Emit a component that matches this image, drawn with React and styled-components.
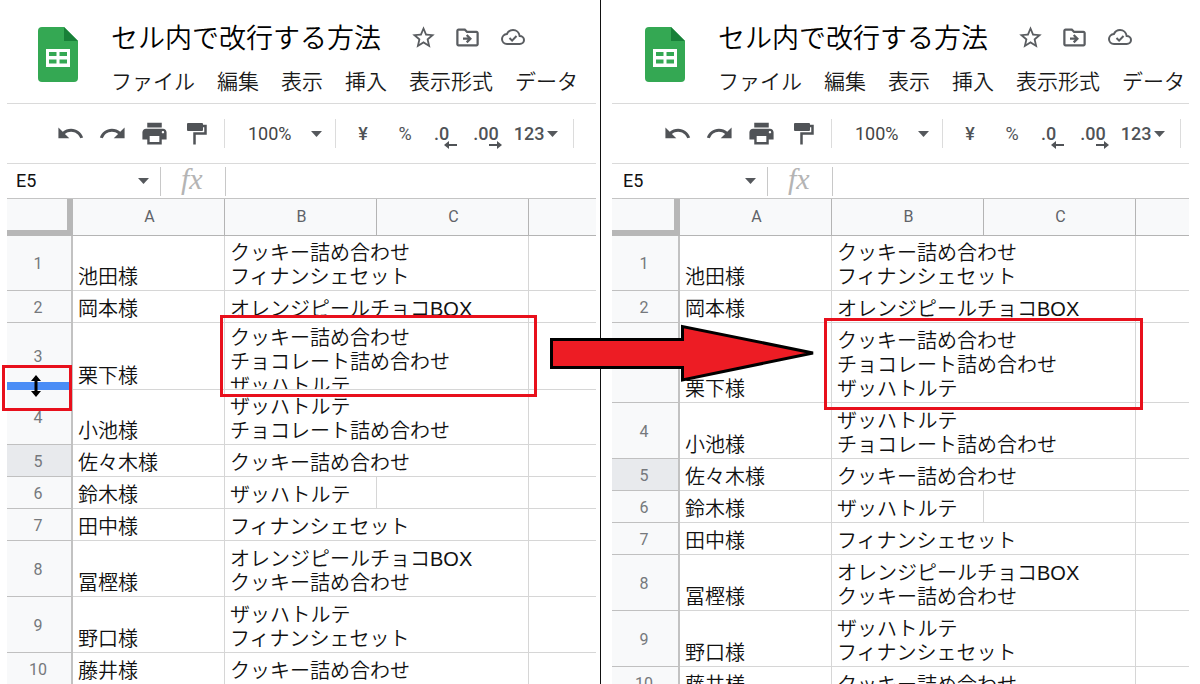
import React from 'react'
import styled, { createGlobalStyle } from 'styled-components'
import { MdStarBorder, MdOutlineDriveFileMove, MdUndo, MdRedo, MdPrint } from 'react-icons/md'

const GlobalStyle = createGlobalStyle`
  * {
    box-sizing: border-box;
  }
  body {
    margin: 0;
    background: #ffffff;
    font-family: Roboto, "Noto Sans CJK JP", sans-serif;
  }
  button, input, select {
    font: inherit;
    color: inherit;
    background: none;
    border: 0;
    padding: 0;
    margin: 0;
  }
`

const Page = styled.main`
  position: relative;
  display: flex;
  height: 100vh;
  overflow: hidden;
`

const Pane = styled.section`
  --inset: ${p => (p.$after ? '2px' : '0px')};
  position: relative;
  width: 50%;
  min-width: 0;
  padding: ${p => (p.$after ? '0 11px' : '0 4px 0 7px')};
  border-left: ${p => (p.$after ? '1px solid #111111' : 'none')};
`

const Header = styled.header`
  display: flex;
  gap: 33px;
  height: 104px;
  padding-left: calc(31px + var(--inset));
  border-bottom: 1px solid #dadada;
`

const Logo = styled.svg`
  flex: none;
  width: 40px;
  height: 55px;
  margin-top: 27px;
`

const DocInfo = styled.div`
  display: flex;
  flex-direction: column;
  gap: 9px;
  padding-top: 17px;
  min-width: 0;
`

const TitleRow = styled.div`
  display: flex;
  align-items: center;
  height: 40px;
`

const Title = styled.h1`
  margin: 0 29px 0 0;
  font: 350 27px/40px "Noto Sans CJK JP", sans-serif;
  color: #000000;
  white-space: nowrap;
`

const TitleButton = styled.button`
  display: flex;
  justify-content: center;
  width: 45px;
  color: #5a5d61;

  &:first-of-type {
    width: 27px;
    margin-right: 8px;
  }
`

const Menu = styled.nav`
  display: flex;
  gap: 22px;
`

const MenuItem = styled.button`
  font: 350 21px/28px "Noto Sans CJK JP", sans-serif;
  color: #1a1a1a;
  white-space: nowrap;
`

const Toolbar = styled.div`
  display: flex;
  align-items: center;
  height: 60px;
  padding-left: calc(42px + var(--inset));
  border-bottom: 1px solid #dadada;
  font-size: 18px;
  color: #505357;
`

const Tool = styled.button`
  display: flex;
  align-items: center;
  justify-content: center;
  width: 42px;
  height: 36px;
  font-weight: ${p => (p.$bold ? 500 : 400)};
`

const Separator = styled.span`
  flex: none;
  width: 1px;
  height: 29px;
  margin: 0 ${p => p.$right || 0}px 0 ${p => p.$left || 0}px;
  background: ${p => p.$color || '#dcdcdc'};
`

const Zoom = styled.label`
  display: flex;
  align-items: center;

  select {
    width: 63px;
    appearance: none;
    color: #444444;
  }
`

const Decimals = styled.div`
  display: flex;
  gap: 16px;
  margin: 0 12px 0 8px;
`

const Decimal = styled.button`
  display: flex;
  flex-direction: column;
  align-items: flex-end;
  padding-top: 9px;
  font-weight: 500;
  line-height: 14px;

  span {
    padding-right: ${p => p.$tail}px;
  }
`

const NumberFormat = styled.button`
  display: flex;
  align-items: center;
  gap: 3px;
  font-weight: 500;
`

const FormulaBar = styled.div`
  display: flex;
  align-items: center;
  height: 35px;
  padding-left: calc(9px + var(--inset));
  border-bottom: 1px solid #c4c4c4;
`

const NameBox = styled.input`
  width: 122px;
  padding-bottom: 2px;
  font-size: 18px;
  color: #111111;
`

const Fx = styled.span`
  width: 64px;
  padding: 0 0 4px 20px;
  font: italic 30px/30px "Liberation Serif", serif;
  color: #b4b4b4;
`

const FormulaInput = styled.input`
  flex: 1;
  min-width: 0;
  padding-left: 6px;
`

const Sheet = styled.table`
  width: 100%;
  table-layout: fixed;
  border-collapse: separate;
  border-spacing: 0;
`

const NumberCol = styled.col`
  width: calc(66px + var(--inset));
`

const DataCol = styled.col`
  width: 152px;
`

const Corner = styled.td`
  height: 37px;
  padding: 0;
  background: #f8f9fa;
  border-right: 6px solid #b7b7b7;
  border-bottom: 6px solid #b7b7b7;
`

const ColHead = styled.th`
  height: 37px;
  padding: 0 0 2px 2px;
  font-size: 16px;
  font-weight: 400;
  color: #606368;
  background: #f8f9fa;
  border-right: 1px solid #b4b4b4;
  border-bottom: 1px solid #b4b4b4;

  &:last-child {
    border-right: 0;
  }
`

const RowHead = styled.th`
  height: ${p => p.$height}px;
  padding: 2px 2px 0 0;
  font-size: 16px;
  font-weight: 400;
  line-height: 20px;
  color: #75787c;
  background: ${p => (p.$active ? '#e8eaed' : '#f8f9fa')};
  border-right: 2px solid #c2c2c2;
  border-bottom: 1px solid #c0c0c0;
`

const Cell = styled.td`
  padding: 0;
  vertical-align: bottom;
  border-right: 1px solid #d6d6d6;
  border-bottom: 1px solid #d6d6d6;

  &:last-child {
    border-right: 0;
  }
`

const CellText = styled.div`
  max-height: ${p => p.$max}px;
  padding: 3px 0 1px 5px;
  overflow-y: clip;
  font: 350 20px/24px "Liberation Sans", "Noto Sans CJK JP", sans-serif;
  color: #111111;
  white-space: pre;
`

const Callout = styled.div`
  position: absolute;
  left: ${p => p.$x}px;
  top: ${p => p.$y}px;
  width: ${p => p.$w}px;
  height: ${p => p.$h}px;
  border: 3px solid #e8101c;
  pointer-events: none;
`

const ResizeBar = styled.div`
  position: absolute;
  left: 7px;
  top: 382px;
  width: 63px;
  height: 8px;
  background: #4a8df6;
`

const ResizeCursor = styled.svg`
  position: absolute;
  left: 30px;
  top: 375px;
  width: 12px;
  height: 22px;
`

const BigArrow = styled.svg`
  position: absolute;
  left: 548px;
  top: 322px;
  width: 270px;
  height: 62px;
`

const menuItems = ['ファイル', '編集', '表示', '挿入', '表示形式', 'データ']

const rows = [
  { name: '池田様', order: 'クッキー詰め合わせ\nフィナンシェセット' },
  { name: '岡本様', order: 'オレンジピールチョコBOX' },
  { name: '栗下様', order: 'クッキー詰め合わせ\nチョコレート詰め合わせ\nザッハトルテ' },
  { name: '小池様', order: 'ザッハトルテ\nチョコレート詰め合わせ' },
  { name: '佐々木様', order: 'クッキー詰め合わせ' },
  { name: '鈴木様', order: 'ザッハトルテ', fits: true },
  { name: '田中様', order: 'フィナンシェセット' },
  { name: '冨樫様', order: 'オレンジピールチョコBOX\nクッキー詰め合わせ' },
  { name: '野口様', order: 'ザッハトルテ\nフィナンシェセット' },
  { name: '藤井様', order: 'クッキー詰め合わせ' },
]

const heightsBefore = [55, 32, 67, 55, 32, 32, 32, 56, 56, 32]
const heightsAfter = [55, 32, 80, 56, 32, 32, 32, 56, 56, 32]

const Caret = () => (
  <svg width="11" height="6" viewBox="0 0 11 6" aria-hidden="true">
    <path d="M0 0h11L5.5 6z" fill="#55585c" />
  </svg>
)

const SheetsLogo = () => (
  <Logo viewBox="0 0 40 55" aria-label="スプレッドシート">
    <path d="M4 0h22l14 14v37a4 4 0 0 1-4 4H4a4 4 0 0 1-4-4V4a4 4 0 0 1 4-4z" fill="#34a853" />
    <path d="M26 0l14 14H26z" fill="#188038" />
    <path
      d="M8 22h24v18H8zM11 25v4h7.500v-4zM21.500 25v4H29v-4zM11 32.500v4h7.500v-4zM21.500 32.500v4H29v-4z"
      fill="#ffffff"
      fillRule="evenodd"
    />
  </Logo>
)

const CloudDone = () => (
  <svg width="24" height="24" viewBox="0 0 24 24" fill="none" stroke="currentColor" strokeWidth="2">
    <path d="M18.700 11c-.5-3.600-3.300-6-6.700-6-2.800 0-5 1.600-6.100 4C3.200 9.300 1 11.400 1 14.100 1 16.900 3.200 19 6 19h12.700C21.100 19 23 17.200 23 15s-1.900-4-4.300-4z" />
    <path d="M8.500 13l2.600 2.600 4.400-4.600" />
  </svg>
)

const PaintFormat = () => (
  <svg width="22" height="22" viewBox="0 0 22 22">
    <rect x="2" y="0" width="16" height="8" rx="1" fill="currentColor" />
    <path d="M18 3h2.500v7.500H9.500V21.500" fill="none" stroke="currentColor" strokeWidth="2.500" />
  </svg>
)

const DecimalArrow = ({ right }) => (
  <svg width="13" height="8" viewBox="0 0 13 8">
    <path
      d={right ? 'M0 3h8V0l5 4-5 4V5H0z' : 'M13 3H5V0L0 4l5 4V5h8z'}
      fill="currentColor"
    />
  </svg>
)

const Spreadsheet = ({ heights, after, children }) => {
  return (
    <Pane $after={after}>
      <Header>
        <SheetsLogo />
        <DocInfo>
          <TitleRow>
            <Title>セル内で改行する方法</Title>
            <TitleButton aria-label="スター"><MdStarBorder size={27} /></TitleButton>
            <TitleButton aria-label="移動"><MdOutlineDriveFileMove size={27} /></TitleButton>
            <TitleButton aria-label="保存済み"><CloudDone /></TitleButton>
          </TitleRow>
          <Menu>
            {menuItems.map(item => <MenuItem key={item}>{item}</MenuItem>)}
          </Menu>
        </DocInfo>
      </Header>

      <Toolbar>
        <Tool aria-label="元に戻す"><MdUndo size={29} /></Tool>
        <Tool aria-label="やり直し"><MdRedo size={29} /></Tool>
        <Tool aria-label="印刷"><MdPrint size={29} /></Tool>
        <Tool aria-label="書式をコピー"><PaintFormat /></Tool>
        <Separator $left={7} $right={23} />
        <Zoom>
          <select aria-label="ズーム" defaultValue="100%">
            <option>100%</option>
          </select>
          <Caret />
        </Zoom>
        <Separator $left={13} $right={6} />
        <Tool $bold>¥</Tool>
        <Tool>%</Tool>
        <Decimals>
          <Decimal $tail={8}>
            <span>.0</span>
            <DecimalArrow />
          </Decimal>
          <Decimal $tail={3}>
            <span>.00</span>
            <DecimalArrow right />
          </Decimal>
        </Decimals>
        <NumberFormat>123 <Caret /></NumberFormat>
        <Separator $left={15} />
      </Toolbar>

      <FormulaBar>
        <NameBox aria-label="名前ボックス" defaultValue="E5" />
        <Caret />
        <Separator $left={11} $color="#c8c8c8" />
        <Fx>fx</Fx>
        <Separator $color="#c8c8c8" />
        <FormulaInput aria-label="数式" />
      </FormulaBar>

      <Sheet>
        <colgroup>
          <NumberCol />
          <DataCol />
          <DataCol />
          <DataCol />
          <col />
        </colgroup>
        <thead>
          <tr>
            <Corner />
            <ColHead>A</ColHead>
            <ColHead>B</ColHead>
            <ColHead>C</ColHead>
            <ColHead />
          </tr>
        </thead>
        <tbody>
          {rows.map((row, i) => (
            <tr key={row.name}>
              <RowHead scope="row" $height={heights[i]} $active={i === 4}>{i + 1}</RowHead>
              <Cell><CellText $max={heights[i] - 1}>{row.name}</CellText></Cell>
              <Cell colSpan={row.fits ? 1 : 2}>
                <CellText $max={heights[i] - 1}>{row.order}</CellText>
              </Cell>
              {row.fits && <Cell />}
              <Cell />
            </tr>
          ))}
        </tbody>
      </Sheet>
      {children}
    </Pane>
  )
}

const App = () => {
  return (
    <>
      <GlobalStyle />
      <Page>
        <Spreadsheet heights={heightsBefore}>
          <ResizeBar />
          <Callout $x={2} $y={365} $w={70} $h={46} />
          <ResizeCursor viewBox="0 0 12 22">
            <path d="M6 0l5 6H7.500v10H11l-5 6-5-6h3.500V6H1z" fill="#000000" />
          </ResizeCursor>
          <Callout $x={220} $y={315} $w={317} $h={82} />
        </Spreadsheet>
        <Spreadsheet heights={heightsAfter} after>
          <Callout $x={223} $y={318} $w={319} $h={92} />
        </Spreadsheet>
        <BigArrow viewBox="0 0 270 62">
          <path
            d="M3.500 17.500H134.500V4.500L265 31 134.500 58V45.500H3.500z"
            fill="#ed1c24"
            stroke="#000000"
            strokeWidth="3"
          />
        </BigArrow>
      </Page>
    </>
  )
}

export default App
